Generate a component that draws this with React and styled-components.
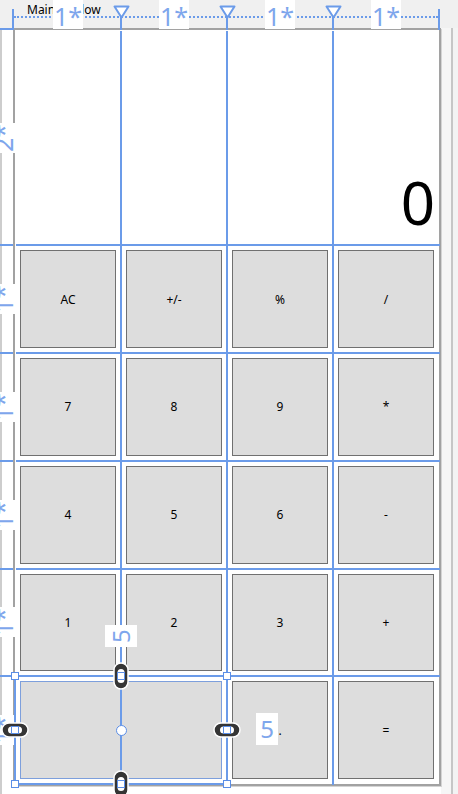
import React from 'react';
import styled, { createGlobalStyle } from 'styled-components';

const BLUE = '#6b9be9';
const LABEL_BLUE = '#7ea6ec';
const FONT = "'Noto Sans', 'Liberation Sans', sans-serif";

const GlobalStyle = createGlobalStyle`
  html, body {
    margin: 0;
    padding: 0;
    background: #fff;
  }
  body {
    font-family: ${FONT};
  }
`;

const Designer = styled.div`
  position: relative;
  width: 458px;
  height: 794px;
  overflow: hidden;
  background: #fff;
`;

const TitleStrip = styled.div`
  height: 28px;
  box-sizing: border-box;
  padding: 1px 0 0 27px;
  background: #f0f0f0;
  font-size: 12px;
  line-height: 18px;
  color: #000;
`;

const Workspace = styled.div`
  display: flex;
  height: 766px;
`;

/* left row ruler */
const SideRuler = styled.div`
  position: relative;
  z-index: 2;
  flex: 0 0 13px;
  width: 13px;
  min-width: 0;
  box-sizing: border-box;
  padding: 2px 0 10px;
  display: grid;
  grid-template-columns: 13px;
  grid-template-rows: 2fr repeat(5, 1fr);
  background: linear-gradient(to right, #cdcdcd 0 2px, #fff 2px);
`;

const SideCell = styled.div`
  position: relative;
  min-width: 0;
  display: flex;
  align-items: center;

  &::after {
    content: '';
    display: ${p => (p.$last ? 'none' : 'block')};
    position: absolute;
    left: 0;
    right: 0;
    bottom: -1px;
    height: 2px;
    background: ${BLUE};
  }
`;

const RowLabel = styled.div`
  flex: 0 0 30px;
  height: 28px;
  margin-left: -12px;
  background: #fff;
  color: ${LABEL_BLUE};
  font-size: 25px;
  line-height: 28px;
  text-align: center;
  transform: rotate(-90deg);
`;

/* the designed window */
const WindowFrame = styled.div`
  position: relative;
  flex: 0 0 428px;
  height: 758px;
  box-sizing: border-box;
  border: 2px solid #a2a2a2;
  background: #fff;
  box-shadow: 1px 1px 0 #d4d4d4;
`;

const CalcGrid = styled.div`
  display: grid;
  grid-template-columns: repeat(4, 1fr);
  grid-template-rows: 2fr repeat(5, 1fr);
  height: 100%;
`;

const Display = styled.div`
  grid-column: 1 / -1;
  display: flex;
  justify-content: flex-end;
  align-items: flex-end;
  padding: 0 4px 2px 0;
  font-size: 60px;
  color: #000;
`;

const CalcButton = styled.button`
  grid-column: span ${p => p.$span || 1};
  min-width: 0;
  min-height: 0;
  margin: 5px;
  padding: 0;
  background: #dddddd;
  border: 1px solid ${p => (p.$selected ? '#7d9fdc' : '#707070')};
  border-radius: 0;
  font: 12px ${FONT};
  color: #000;
`;

const LineLayer = styled.div`
  position: absolute;
  top: 1px;
  left: 1px;
  width: 100%;
  height: 100%;
  display: grid;
  grid-template-columns: repeat(4, 1fr);
  grid-template-rows: 2fr repeat(5, 1fr);
  pointer-events: none;
`;

const LineCell = styled.div`
  border-right: ${p => (p.$right ? `2px solid ${BLUE}` : 'none')};
  border-bottom: ${p => (p.$bottom ? `2px solid ${BLUE}` : 'none')};
`;

const AdornerLayer = styled(LineLayer)`
  top: 0;
  left: 0;
  z-index: 3;
`;

/* zero-width tracks sit on the frame's edges and its centre lines */
const SelectionFrame = styled.div`
  grid-row: 6;
  grid-column: 1 / span 2;
  position: relative;
  display: grid;
  grid-template-columns: 0 1fr 0 1fr 0;
  grid-template-rows: 0 1fr 0 1fr 0;
  outline: 2px solid ${BLUE};
  outline-offset: -1px;
`;

const Anchor = styled.div`
  grid-column: ${p => p.$col};
  grid-row: ${p => p.$row};
  justify-self: center;
  align-self: center;
  display: flex;
`;

const Handle = styled(Anchor)`
  position: relative;
  z-index: 1;
  width: 8px;
  height: 8px;
  flex-shrink: 0;
  box-sizing: border-box;
  background: #fff;
  border: 1px solid #5b8ee6;
`;

const CenterDot = styled(Handle)`
  width: 11px;
  height: 11px;
  border-radius: 50%;
`;

const ChainIcon = styled.svg`
  flex-shrink: 0;
  transform: rotate(${p => (p.$vertical ? 90 : 0)}deg);
`;

const MarginLabel = styled.div`
  position: absolute;
  width: 22px;
  height: 32px;
  background: #fff;
  color: ${LABEL_BLUE};
  font-size: 24px;
  line-height: 32px;
  text-align: center;
`;

const TopMargin = styled(MarginLabel)`
  left: calc(50% - 11px);
  top: -56px;
  transform: rotate(-90deg);
`;

const RightMargin = styled(MarginLabel)`
  right: -51px;
  top: calc(50% - 17px);
`;

const RightGutter = styled.div`
  flex: 1;
  background: linear-gradient(to right, #f6f6f6 0 10px, #c6c6c6 10px 12px, #f3f3f3 12px);
`;

/* top column ruler, laid over the title strip */
const TopRuler = styled.div`
  position: absolute;
  top: 0;
  left: 0;
  width: 100%;
  height: 30px;
  z-index: 4;
  pointer-events: none;
`;

const DottedTrack = styled.div`
  position: absolute;
  left: 14px;
  width: 424px;
  top: 16px;
  border-top: 2px dotted ${BLUE};
`;

const CornerTick = styled.div`
  position: absolute;
  top: 9px;
  left: ${p => p.$left}px;
  width: 2px;
  height: 21px;
  background: ${BLUE};
`;

const CornerArm = styled.div`
  position: absolute;
  top: 28px;
  left: 0;
  width: 14px;
  height: 2px;
  background: ${BLUE};
`;

const ColumnTrack = styled.div`
  position: absolute;
  left: 15px;
  top: 0;
  width: 424px;
  height: 30px;
  display: grid;
  grid-template-columns: repeat(4, 1fr);
`;

const ColumnSlot = styled.div`
  position: relative;
  display: flex;
  justify-content: center;
`;

const ColumnLabel = styled.div`
  width: 30px;
  height: 29px;
  box-sizing: border-box;
  padding-top: 4px;
  background: #fff;
  color: ${LABEL_BLUE};
  font-size: 25px;
  line-height: 25px;
  text-align: center;
`;

const Marker = styled.svg`
  position: absolute;
  right: -8.5px;
  top: 5px;
`;

const MarkerStem = styled.div`
  position: absolute;
  right: -1px;
  top: 17px;
  bottom: 0;
  width: 2px;
  background: ${BLUE};
`;

const Chain = ({ col, row, vertical }) => (
  <Anchor $col={col} $row={row}>
    <ChainIcon $vertical={vertical} width="28" height="16" viewBox="0 0 28 16">
      <rect x="1" y="1" width="26" height="14" rx="7" fill="#353535" stroke="#fff" strokeWidth="1.5" />
      <rect x="7" y="4.5" width="14" height="7" rx="3.5" fill="#fff" />
    </ChainIcon>
  </Anchor>
);

const keyRows = [
  ['AC', '+/-', '%', '/'],
  ['7', '8', '9', '*'],
  ['4', '5', '6', '-'],
  ['1', '2', '3', '+'],
];

const handleSpots = [
  [1, 1], [3, 1], [5, 1],
  [1, 3], [5, 3],
  [1, 5], [3, 5], [5, 5],
];

export default function App() {
  const lineCells = [];
  for (let r = 0; r < 6; r++) {
    for (let c = 0; c < 4; c++) {
      lineCells.push(<LineCell key={`${r}-${c}`} $right={c < 3} $bottom={r < 5} />);
    }
  }

  return (
    <Designer>
      <GlobalStyle />
      <TitleStrip>MainWindow</TitleStrip>

      <Workspace>
        <SideRuler>
          {['2*', '1*', '1*', '1*', '1*', '1*'].map((label, i) => (
            <SideCell key={i} $last={i === 5}>
              <RowLabel>{label}</RowLabel>
            </SideCell>
          ))}
        </SideRuler>

        <WindowFrame>
          <CalcGrid>
            <Display>0</Display>
            {keyRows.flat().map((k, i) => (
              <CalcButton key={i}>{k}</CalcButton>
            ))}
            <CalcButton $span={2} $selected>0</CalcButton>
            <CalcButton>.</CalcButton>
            <CalcButton>=</CalcButton>
          </CalcGrid>

          <LineLayer>{lineCells}</LineLayer>

          <AdornerLayer>
            <SelectionFrame>
              <Chain col={3} row={1} vertical />
              <Chain col={3} row={5} vertical />
              <Chain col={1} row={3} />
              <Chain col={5} row={3} />
              {handleSpots.map(([c, r]) => (
                <Handle key={`${c}-${r}`} $col={c} $row={r} />
              ))}
              <CenterDot $col={3} $row={3} />
              <TopMargin>5</TopMargin>
              <RightMargin>5</RightMargin>
            </SelectionFrame>
          </AdornerLayer>
        </WindowFrame>

        <RightGutter />
      </Workspace>

      <TopRuler>
        <DottedTrack />
        <CornerTick $left={12} />
        <CornerTick $left={438} />
        <CornerArm />
        <ColumnTrack>
          {[0, 1, 2, 3].map(i => (
            <ColumnSlot key={i}>
              <ColumnLabel>1*</ColumnLabel>
              {i < 3 && (
                <>
                  <MarkerStem />
                  <Marker width="17" height="14" viewBox="0 0 17 14">
                    <path d="M1.5 1.5 L15.5 1.5 L8.5 12.5 Z" fill="#fff" stroke={BLUE} strokeWidth="2" strokeLinejoin="round" />
                  </Marker>
                </>
              )}
            </ColumnSlot>
          ))}
        </ColumnTrack>
      </TopRuler>
    </Designer>
  );
}
